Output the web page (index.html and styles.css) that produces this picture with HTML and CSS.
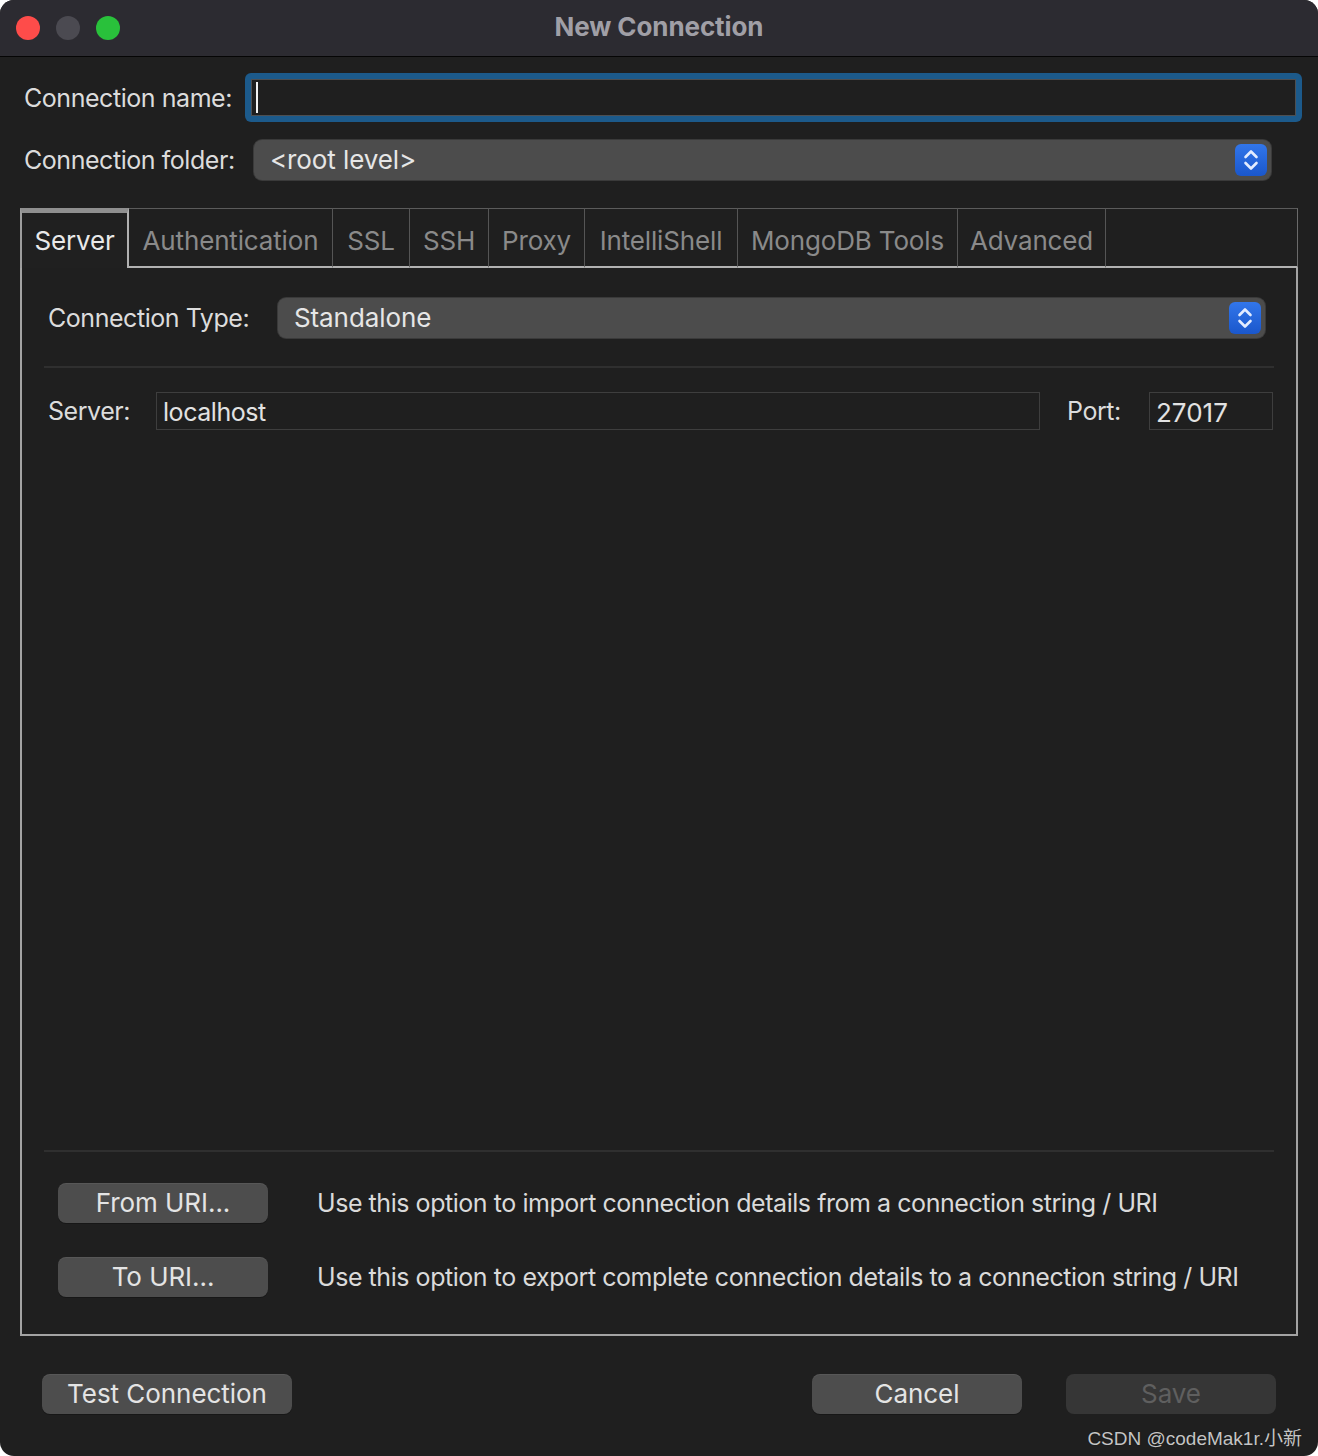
FILE: index.html
```html
<!DOCTYPE html>
<html lang="en">
<head>
<meta charset="utf-8">
<title>New Connection</title>
<link rel="stylesheet" href="styles.css">
</head>
<body>
<div class="window">
  <header class="titlebar">
    <div class="lights">
      <span class="light light-red"></span>
      <span class="light light-gray"></span>
      <span class="light light-green"></span>
    </div>
    <div class="title">New Connection</div>
    <div class="spacer"></div>
  </header>

  <main class="content">
    <div class="row row-name">
      <label class="label label-name">Connection name:</label>
      <div class="focus-ring">
        <div class="text-field"><span class="caret"></span></div>
      </div>
    </div>

    <div class="row row-folder">
      <label class="label label-folder">Connection folder:</label>
      <div class="popup popup-folder">
        <span class="popup-text">&lt;root level&gt;</span>
        <span class="stepper">
          <svg viewBox="0 0 32 32" width="32" height="32"><path d="M10.5 13 L16 7.5 L21.5 13" /><path d="M10.5 19 L16 24.5 L21.5 19" /></svg>
        </span>
      </div>
    </div>

    <section class="tabview">
      <nav class="tabbar">
        <div class="tab tab-active t-server">Server</div>
        <div class="tab t-auth">Authentication</div>
        <div class="tab t-ssl">SSL</div>
        <div class="tab t-ssh">SSH</div>
        <div class="tab t-proxy">Proxy</div>
        <div class="tab t-intelli">IntelliShell</div>
        <div class="tab t-mongo">MongoDB Tools</div>
        <div class="tab t-adv">Advanced</div>
        <div class="tab-fill"></div>
      </nav>

      <div class="panel">
        <div class="row row-type">
          <label class="label label-type">Connection Type:</label>
          <div class="popup popup-type">
            <span class="popup-text">Standalone</span>
            <span class="stepper">
              <svg viewBox="0 0 32 32" width="32" height="32"><path d="M10.5 13 L16 7.5 L21.5 13" /><path d="M10.5 19 L16 24.5 L21.5 19" /></svg>
            </span>
          </div>
        </div>

        <div class="divider divider-top"></div>

        <div class="row row-server">
          <label class="label label-server">Server:</label>
          <div class="input input-server">localhost</div>
          <label class="label label-port">Port:</label>
          <div class="input input-port">27017</div>
        </div>

        <div class="panel-space"></div>

        <div class="divider divider-bottom"></div>

        <div class="uri-row uri-from">
          <button class="btn btn-uri">From URI...</button>
          <span class="uri-desc">Use this option to import connection details from a connection string / URI</span>
        </div>
        <div class="uri-row uri-to">
          <button class="btn btn-uri">To URI...</button>
          <span class="uri-desc">Use this option to export complete connection details to a connection string / URI</span>
        </div>
      </div>
    </section>

    <footer class="footer">
      <div class="footer-buttons">
        <button class="btn btn-test">Test Connection</button>
        <div class="footer-gap"></div>
        <button class="btn btn-cancel">Cancel</button>
        <button class="btn btn-save" disabled>Save</button>
      </div>
      <div class="watermark">CSDN @codeMak1r.小新</div>
    </footer>
  </main>
</div>
</body>
</html>
```

FILE: styles.css
```css
* { box-sizing: border-box; }

html, body {
  margin: 0;
  padding: 0;
  background: #ffffff;
}

body {
  font-family: "Inter", "Liberation Sans", "Noto Sans CJK SC", sans-serif;
  font-size: 25px;
  letter-spacing: -0.45px;
  color: #dedede;
}

.window {
  width: 1318px;
  height: 1456px;
  border-radius: 14px;
  overflow: hidden;
  background: #1f1f1f;
  display: flex;
  flex-direction: column;
}

/* Title bar */
.titlebar {
  height: 57px;
  flex: 0 0 57px;
  background: #2c2b31;
  border-bottom: 1px solid #050505;
  display: grid;
  grid-template-columns: 1fr auto 1fr;
  align-items: center;
}

.lights {
  display: flex;
  gap: 16px;
  padding-left: 16px;
  padding-bottom: 1px;
}

.light {
  width: 24px;
  height: 24px;
  border-radius: 50%;
  display: block;
}
.light-red { background: #fe4c4a; }
.light-gray { background: #4b4a51; }
.light-green { background: #29c13b; }

.title {
  font-weight: 700;
  font-size: 26px;
  color: #a09fa6;
  letter-spacing: -0.1px;
  padding-bottom: 3px;
}

/* Content */
.content {
  flex: 1;
  display: flex;
  flex-direction: column;
  padding: 16px 0 0 0;
  min-height: 0;
}

.row {
  display: flex;
  align-items: center;
}

.label {
  color: #dcdcdc;
  white-space: nowrap;
  flex-shrink: 0;
}

.row-name {
  padding-left: 24px;
  height: 49px;
}
.label-name { width: 221px; }

.focus-ring {
  width: 1057px;
  height: 49px;
  background: #1c5a8b;
  border-radius: 6px;
  padding: 6px;
}
.text-field {
  height: 100%;
  background: #1f1f1f;
  border: 1px solid #4d4f52;
  display: flex;
  align-items: center;
  padding-left: 4px;
}
.caret {
  width: 2px;
  height: 31px;
  background: #f2f2f2;
}

.row-folder {
  margin-top: 18px;
  padding-left: 24px;
  height: 40px;
}
.label-folder { width: 230px; }

.popup {
  height: 40px;
  background: #4c4c4c;
  border-radius: 8px;
  box-shadow: 0 0 0 1px #3a3a3a;
  display: flex;
  align-items: center;
  justify-content: space-between;
  padding: 0 4px 0 16px;
  flex-shrink: 0;
}
.popup-folder { width: 1017px; }
.popup-text {
  color: #e6e6e6;
  font-size: 26px;
  letter-spacing: -0.1px;
  padding-bottom: 2px;
}

.stepper {
  width: 32px;
  height: 32px;
  border-radius: 6px;
  background: linear-gradient(#3276ea, #1a57cc);
  display: flex;
}
.stepper svg {
  fill: none;
  stroke: #e3ecff;
  stroke-width: 2.6;
  stroke-linecap: round;
  stroke-linejoin: round;
}

/* Tab view */
.tabview {
  margin: 28px 20px 0 20px;
  flex: 1;
  display: flex;
  flex-direction: column;
  min-height: 0;
}

.tabbar {
  display: flex;
  height: 60px;
  flex: 0 0 60px;
}

.tab {
  height: 60px;
  border-top: 1px solid #5b5b5b;
  border-right: 1px solid #555555;
  border-bottom: 2px solid #b2b2b2;
  color: #8a8a8a;
  font-size: 26px;
  letter-spacing: -0.15px;
  display: flex;
  align-items: center;
  justify-content: center;
  white-space: nowrap;
  padding-top: 5px;
  flex-shrink: 0;
}

.tab-active {
  color: #e9e9e9;
  border-top: 5px solid #8f8f8f;
  border-left: 2px solid #9d9d9d;
  border-right: 2px solid #b0b0b0;
  border-bottom: none;
  background: #202020;
  padding-top: 0;
}

.t-server { width: 109px; }
.t-auth { width: 204px; }
.t-ssl { width: 77px; }
.t-ssh { width: 79px; }
.t-proxy { width: 96px; }
.t-intelli { width: 153px; }
.t-mongo { width: 220px; }
.t-adv { width: 148px; }

.tab-fill {
  flex: 1;
  height: 60px;
  border-top: 1px solid #5b5b5b;
  border-right: 1px solid #6a6a6a;
  border-bottom: 2px solid #b2b2b2;
}

.panel {
  flex: 1;
  border: 2px solid #a3a3a3;
  border-top: none;
  display: flex;
  flex-direction: column;
  padding: 30px 22px 37px 22px;
  min-height: 0;
}

.row-type {
  height: 40px;
  padding-left: 4px;
}
.label-type { width: 230px; }
.popup-type { width: 987px; }

.divider {
  height: 2px;
  background: #2f2f2f;
  flex-shrink: 0;
}
.divider-top { margin-top: 28px; }

.row-server {
  margin-top: 24px;
  height: 38px;
  padding-left: 4px;
}
.label-server { width: 108px; }

.input {
  height: 38px;
  border: 1px solid #3e3e3e;
  background: #1f1f1f;
  color: #e2e2e2;
  display: flex;
  align-items: center;
  padding: 2px 0 0 6px;
  flex-shrink: 0;
}
.input-server { width: 884px; }
.label-port {
  width: 109px;
  padding-left: 27px;
}
.input-port {
  width: 124px;
  font-size: 26px;
  letter-spacing: 0;
}

.panel-space { flex: 1; }

.uri-row {
  display: flex;
  align-items: center;
  padding-left: 14px;
  height: 40px;
}
.uri-from { margin-top: 31px; }
.uri-to { margin-top: 34px; }

.uri-desc {
  margin-left: 49px;
  color: #dadada;
  white-space: nowrap;
}

.btn {
  font-family: inherit;
  font-size: 26px;
  letter-spacing: -0.05px;
  height: 40px;
  border: none;
  border-radius: 8px;
  background: #4d4d4d;
  color: #e4e4e4;
  box-shadow: 0 1px 0 rgba(0,0,0,0.25), inset 0 1px 0 rgba(255,255,255,0.06);
  padding: 0 0 2px 0;
  display: flex;
  align-items: center;
  justify-content: center;
  flex-shrink: 0;
}

.btn-uri { width: 210px; }

/* Footer */
.footer {
  flex: 0 0 120px;
  display: flex;
  flex-direction: column;
  padding-top: 38px;
}
.footer-buttons {
  display: flex;
  align-items: center;
  padding-left: 42px;
}
.btn-test { width: 250px; }
.footer-gap { width: 520px; }
.btn-cancel { width: 210px; }
.btn-save {
  width: 210px;
  margin-left: 44px;
  background: #363636;
  color: #5f5f5f;
  box-shadow: none;
}

.watermark {
  align-self: flex-end;
  margin-top: 9px;
  margin-right: 16px;
  font-family: "Liberation Sans", "Noto Sans CJK SC", sans-serif;
  font-size: 19px;
  letter-spacing: 0;
  color: #c4c4c4;
  text-shadow: 0 0 1px rgba(0,0,0,0.6);
}
```
